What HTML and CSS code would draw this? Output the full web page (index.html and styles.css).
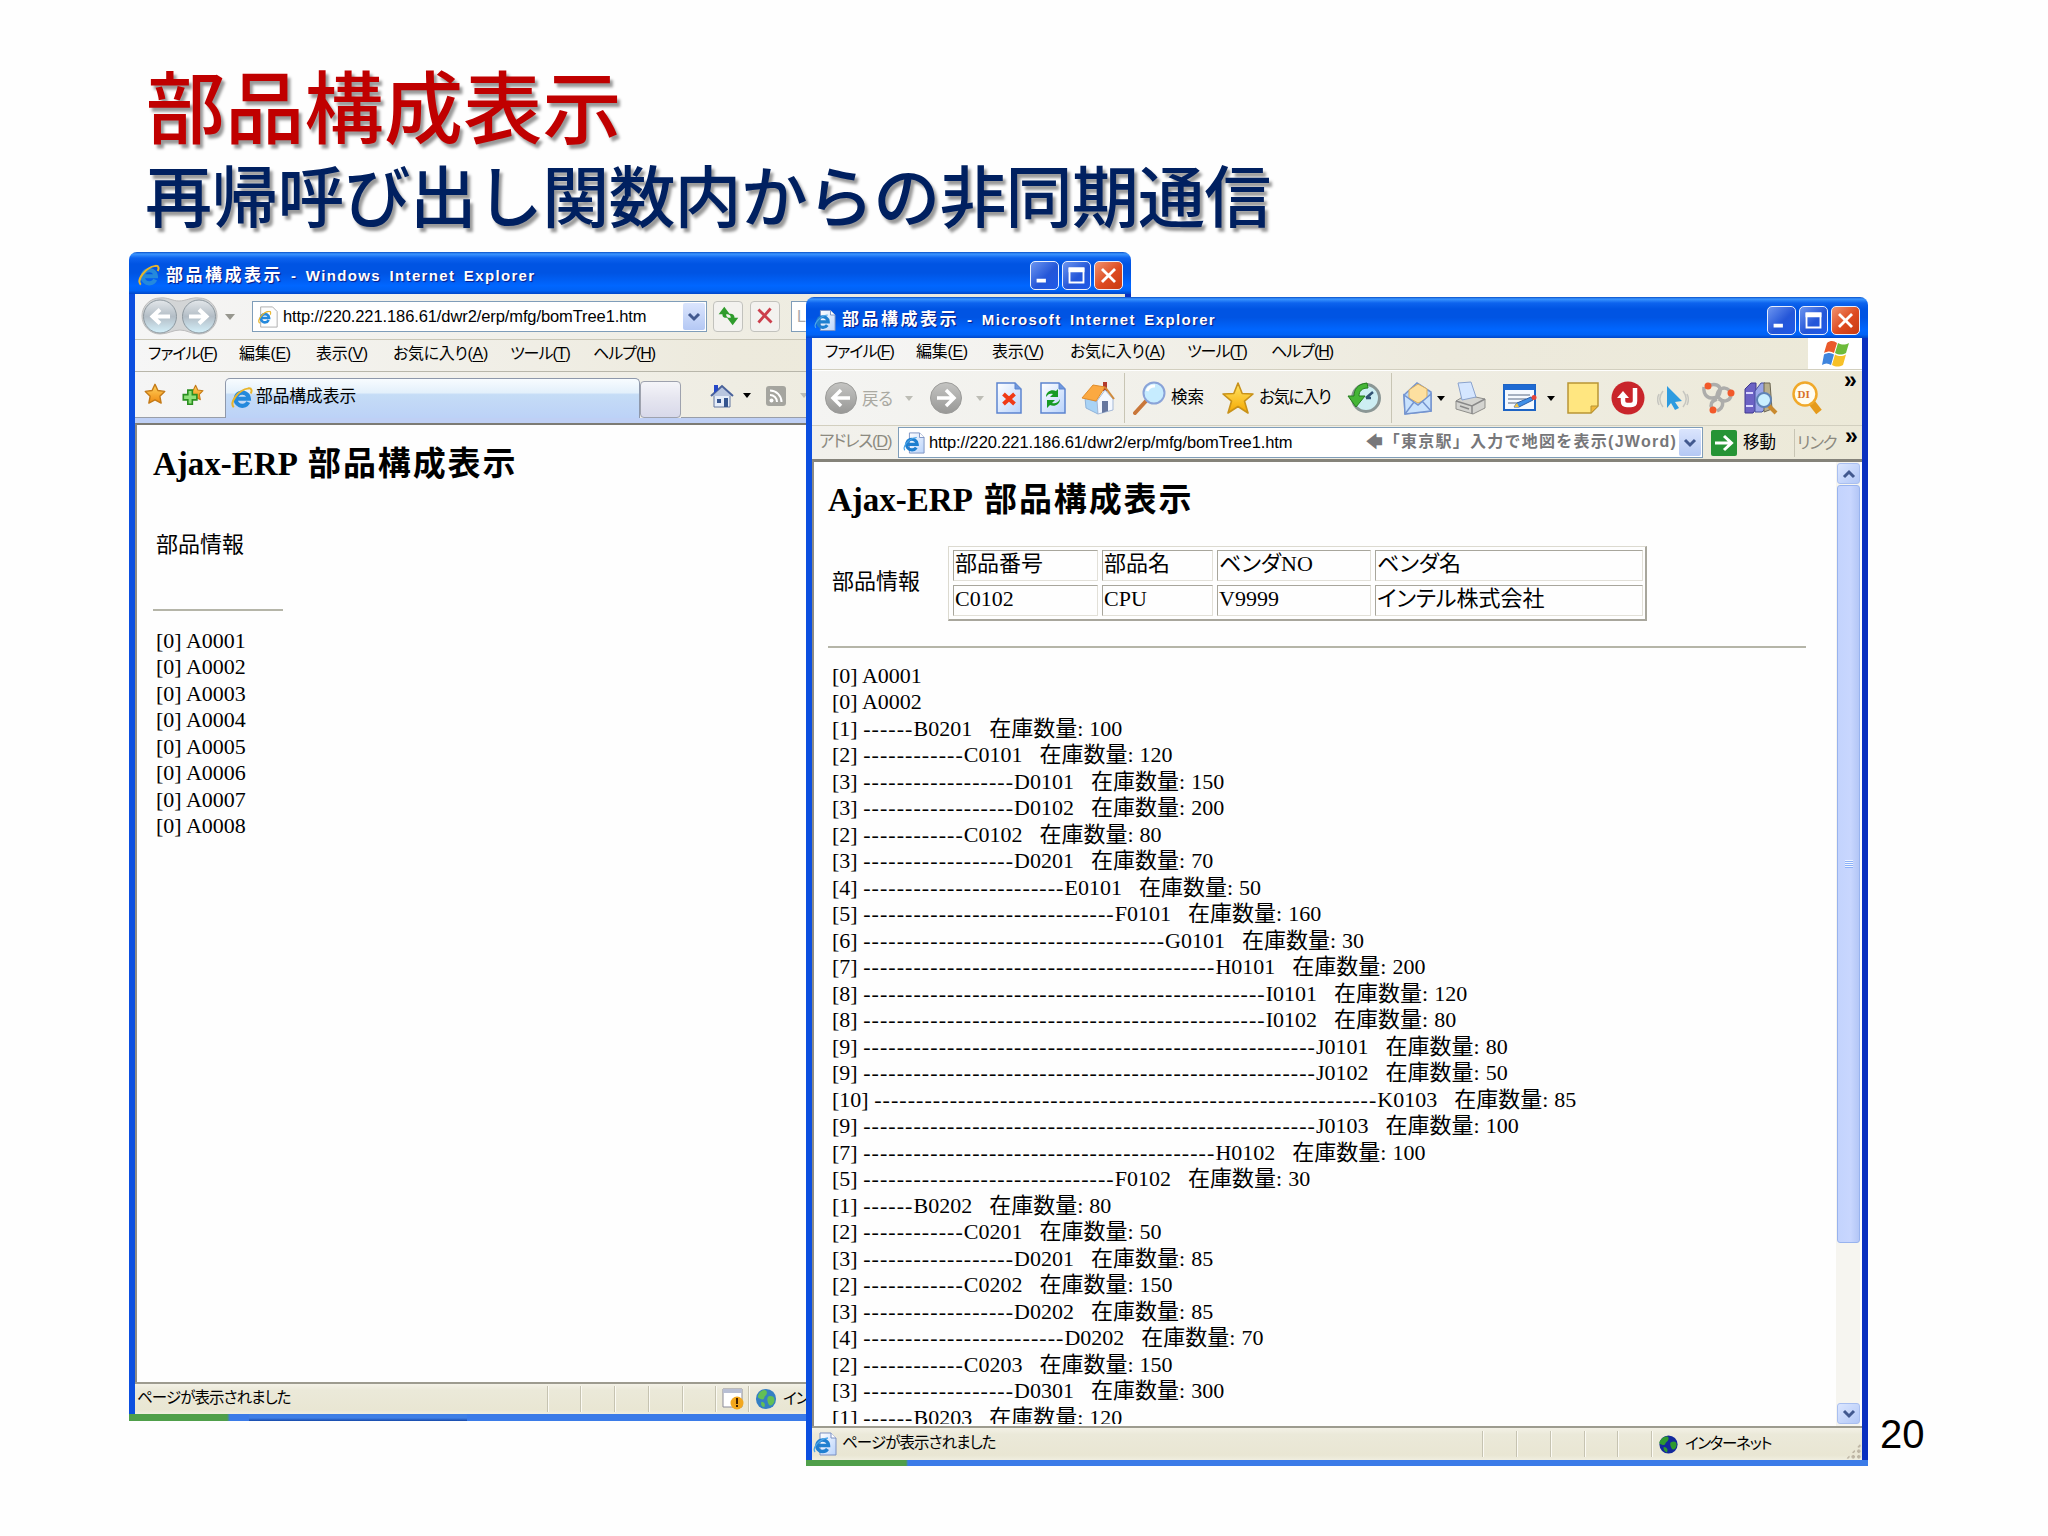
FILE: index.html
```html
<!DOCTYPE html>
<html lang="ja">
<head>
  <meta charset="UTF-8">
  <meta name="viewport" content="width=device-width, initial-scale=1.0">
  <title>部品構成表示</title>
  <link rel="stylesheet" href="styles.css">
</head>
<body>
  <!-- shared icons -->
  <svg class="defs" width="0" height="0">
    <defs>
      <linearGradient id="gPage" x1="0" y1="0" x2="1" y2="1"><stop offset="0" stop-color="#ffffff"/><stop offset="1" stop-color="#b9d3fb"/></linearGradient>
      <linearGradient id="gGrey" x1="0" y1="0" x2="0" y2="1"><stop offset="0" stop-color="#c4c4c2"/><stop offset="1" stop-color="#989896"/></linearGradient>
      <linearGradient id="gGold" x1="0" y1="0" x2="0" y2="1"><stop offset="0" stop-color="#ffe566"/><stop offset="1" stop-color="#f5a800"/></linearGradient>
      <linearGradient id="gOrange" x1="0" y1="0" x2="0" y2="1"><stop offset="0" stop-color="#ffd560"/><stop offset="1" stop-color="#f08a10"/></linearGradient>
      <linearGradient id="gNav" x1="0" y1="0" x2="0" y2="1"><stop offset="0" stop-color="#e3e7ea"/><stop offset=".5" stop-color="#b3bdc6"/><stop offset="1" stop-color="#d4f0fa"/></linearGradient>
      <symbol id="ie" viewBox="0 0 24 24">
        <path d="M18.800 16.500A7.200 7.200 0 1 1 19.500 12.800H7" fill="none" stroke="#2489dc" stroke-width="4.500"/>
        <path d="M3 22C-2 17 8 3 19 1.500c4-.4 4 3 2.500 5.500" fill="none" stroke="#e8b52c" stroke-width="2.200"/>
      </symbol>
      <symbol id="iepage" viewBox="0 0 24 24">
        <path d="M7 1h11l5 5v17H7z" fill="url(#gPage)" stroke="#7a8fc0"/>
        <path d="M18 1v5h5" fill="#fff" stroke="#7a8fc0"/>
        <path d="M14.500 17A5.800 5.800 0 1 1 15.500 13.500H5" fill="none" stroke="#1f7fd0" stroke-width="3.500"/>
        <path d="M2 20C-1 16 6 7 15 6" fill="none" stroke="#4aa5e8" stroke-width="1.300"/>
      </symbol>
      <symbol id="star" viewBox="0 0 34 34">
        <path d="M17 2l4.200 10.500L32 13l-8.500 7.200L27 32l-10-6.500L7 32l3.500-11.800L2 13l10.800-.5z" fill="url(#gGold)" stroke="#c8921a" stroke-width="1.600" stroke-linejoin="round"/>
      </symbol>
      <symbol id="star7" viewBox="0 0 34 34">
        <path d="M17 2l4.500 9.500L32 13l-7.500 7.500L26.500 31 17 26l-9.500 5 2-10.500L2 13l10.500-1.500z" fill="url(#gOrange)" stroke="#c47a18" stroke-width="2.200" stroke-linejoin="round"/>
      </symbol>
      <symbol id="page" viewBox="0 0 26 32">
        <path d="M1 1h18l6 6v24H1z" fill="url(#gPage)" stroke="#5c84cf" stroke-width="1.500"/>
        <path d="M19 1v6h6" fill="#6f97dd" stroke="#5c84cf"/>
      </symbol>
      <symbol id="chev" viewBox="0 0 14 10"><path d="M2 2l5 5 5-5" fill="none" stroke="#42598f" stroke-width="3"/></symbol>
    </defs>
  </svg>

  <main class="slide">
    <h1 class="slide-title">部品構成表示</h1>
    <p class="slide-sub">再帰呼び出し関数内からの非同期通信</p>

    <!-- back window : IE7 -->
    <section class="window win-back">
      <header class="titlebar">
        <svg class="title-icon" viewBox="0 0 24 24"><use href="#ie"/></svg>
        <span class="title-jp">部品構成表示</span><span class="title-en">- Windows Internet Explorer</span>
        <div class="controls">
          <span class="ctl"><svg viewBox="0 0 29 29"><path d="M6 18h10v4H6z" fill="#fff"/></svg></span>
          <span class="ctl"><svg viewBox="0 0 29 29"><path d="M7 7h15v15H7z" fill="none" stroke="#fff" stroke-width="2"/><path d="M6 6h17v5H6z" fill="#fff"/></svg></span>
          <span class="ctl close"><svg viewBox="0 0 29 29"><path d="M7.500 7.500l14 14m0-14l-14 14" stroke="#fff" stroke-width="3"/></svg></span>
        </div>
      </header>
      <div class="frame">
        <div class="nav7">
          <svg class="nav-btns" viewBox="0 0 78 39">
            <path d="M19 1C27 0 31 4 38 4S50 0 58 1a18 18 0 0 1 0 36c-8 0-12-4-19-4s-12 4-20 4A18 18 0 0 1 19 1z" fill="#d3d5d6" stroke="#bcbcbc"/>
            <circle cx="19" cy="19.500" r="16.500" fill="url(#gNav)" stroke="#8e989f"/>
            <circle cx="58" cy="19.500" r="16.500" fill="url(#gNav)" stroke="#8e989f"/>
            <path d="M29 19.500H12m7-7l-7.500 7 7.500 7M48 19.500h17m-7-7l7.500 7-7.500 7" fill="none" stroke="#fff" stroke-width="4"/>
          </svg>
          <span class="tri grey"></span>
          <div class="addr">
            <svg class="i22" viewBox="0 0 24 24"><path d="M4 1h13l5 5v17H4z" fill="#fdfdfd" stroke="#aaa"/><svg x="1" y="5" width="15" height="15"><use href="#ie"/></svg></svg>
            <span class="url">http://220.221.186.61/dwr2/erp/mfg/bomTree1.htm</span>
            <span class="drop"><svg viewBox="0 0 14 10"><use href="#chev"/></svg></span>
          </div>
          <span class="btn7"><svg viewBox="0 0 30 30"><path d="M11 5L5 13h4c0 4 3 4 6 4-2-2-2-3-2-4h4zM20 25l6-8h-4c0-4-3-5-7-4 3 1 3 3 3 4h-4z" fill="#2f9c2c"/></svg></span>
          <span class="btn7"><svg viewBox="0 0 30 30"><path d="M8 8l14 14M21 7L8 22" stroke="#cc3f4c" stroke-width="3"/></svg></span>
          <span class="search7">L</span>
        </div>
        <nav class="menu menu7">
          <span class="m1">ファイル(<u>F</u>)</span><span>編集(<u>E</u>)</span><span>表示(<u>V</u>)</span><span class="m4">お気に入り(<u>A</u>)</span><span class="m1">ツール(<u>T</u>)</span><span class="m1">ヘルプ(<u>H</u>)</span>
        </nav>
        <div class="tabs7">
          <div class="fav7">
            <svg class="i22" viewBox="0 0 34 34"><use href="#star7"/></svg>
            <svg class="i22" viewBox="0 0 34 34"><svg x="8" width="26" height="30"><use href="#star7"/></svg><path d="M9 11h7v7h7v8h-7v7H9v-7H2v-8h7z" fill="#8ee07a" stroke="#2b8f21" stroke-width="2.500"/></svg>
          </div>
          <div class="tab7"><svg class="i22" viewBox="0 0 24 24"><use href="#ie"/></svg><span>部品構成表示</span></div>
          <div class="newtab7"></div>
          <div class="cmd7">
            <svg width="24" height="26" viewBox="0 0 24 26"><path d="M4 12h16v12H4z" fill="#e6edf8" stroke="#63779f"/><path d="M1 13L12 3l11 10" fill="#b9c6df" stroke="#4a629a" stroke-width="2"/><path d="M4 2h4v5l-4 3z" fill="#2648c8"/><path d="M7 16h4v4H7zM14 15h4v9h-4z" fill="#35558f"/></svg>
            <span class="tri"></span>
            <svg width="20" height="20" viewBox="0 0 20 20"><rect width="20" height="20" rx="3" fill="#a5a59f"/><circle cx="5.500" cy="14.500" r="2" fill="#fff"/><path d="M4 9a7 7 0 0 1 7 7M4 4.500A11.500 11.500 0 0 1 15.500 16" fill="none" stroke="#fff" stroke-width="2"/></svg>
            <span class="tri pale"></span>
          </div>
        </div>
        <div class="page page7">
          <h2><b>Ajax-ERP</b>部品構成表示</h2>
          <p class="info">部品情報</p>
          <hr>
          <div class="tree">
            <div>[0] A0001</div>
            <div>[0] A0002</div>
            <div>[0] A0003</div>
            <div>[0] A0004</div>
            <div>[0] A0005</div>
            <div>[0] A0006</div>
            <div>[0] A0007</div>
            <div>[0] A0008</div>
          </div>
        </div>
        <footer class="status status7">
          <span class="st-text">ページが表示されました</span>
          <i></i><i></i><i></i><i></i><i></i>
          <i class="cell"><svg width="22" height="22" viewBox="0 0 22 22"><path d="M1 1h19v18H1z" fill="#fff" stroke="#8b8b98"/><path d="M1 1h19v4H1z" fill="#b8bfd4"/><circle cx="15" cy="15" r="6.500" fill="#f2a71d"/><path d="M14 10h2v6h-2zM14 17h2v2h-2z" fill="#402000"/></svg></i>
          <i class="cell"><svg width="22" height="22" viewBox="0 0 24 24"><circle cx="12" cy="12" r="11" fill="#347fc4"/><path d="M6 4c4-3 7-2 7 1s-2 3-3 6-4 1-6 0 0-5 2-7zM15 9c5-1 7 2 6 6s-5 5-6 3-3-7 0-9zM7 15c3 0 5 3 3 6-3-1-4-3-3-6z" fill="#63bf55"/></svg><span>イン</span></i>
        </footer>
      </div>
      <div class="taskstrip"></div>
    </section>

    <!-- front window : IE6 -->
    <section class="window win-front">
      <header class="titlebar">
        <svg class="title-icon" viewBox="0 0 24 24"><use href="#iepage"/></svg>
        <span class="title-jp">部品構成表示</span><span class="title-en">- Microsoft Internet Explorer</span>
        <div class="controls">
          <span class="ctl"><svg viewBox="0 0 29 29"><path d="M6 18h10v4H6z" fill="#fff"/></svg></span>
          <span class="ctl"><svg viewBox="0 0 29 29"><path d="M7 7h15v15H7z" fill="none" stroke="#fff" stroke-width="2"/><path d="M6 6h17v5H6z" fill="#fff"/></svg></span>
          <span class="ctl close"><svg viewBox="0 0 29 29"><path d="M7.500 7.500l14 14m0-14l-14 14" stroke="#fff" stroke-width="3"/></svg></span>
        </div>
      </header>
      <div class="frame">
        <nav class="menu menu6">
          <span class="m1">ファイル(<u>F</u>)</span><span>編集(<u>E</u>)</span><span>表示(<u>V</u>)</span><span class="m4">お気に入り(<u>A</u>)</span><span class="m1">ツール(<u>T</u>)</span><span class="m1">ヘルプ(<u>H</u>)</span>
          <div class="flag"><svg width="28" height="28" viewBox="0 0 28 28">
            <path d="M5 3c4-3 7-2 10 0l-3 10c-3-2-6-2-10 0z" fill="#ea5a2b"/><path d="M16 3c4 2 7 2 11 0l-3 10c-4 2-7 2-11 0z" fill="#6dbb3a"/>
            <path d="M2 14.500c4-2 7-2 10 0L9 25c-3-2-6-2-9 0z" fill="#3f85dd"/><path d="M13 14.500c4 2 7 2 11 0l-3 10.500c-4 2-7 2-11 0z" fill="#f7c128"/></svg></div>
        </nav>
        <div class="toolbar">
          <svg class="ic" width="32" height="32" viewBox="0 0 32 32"><circle cx="16" cy="16" r="15.500" fill="url(#gGrey)" stroke="#9b9b99"/><path d="M25 16H9m7-8l-8 8 8 8" fill="none" stroke="#fff" stroke-width="3.500"/></svg>
          <span class="dim">戻る</span>
          <span class="tri pale"></span>
          <svg class="ic" width="32" height="32" viewBox="0 0 32 32"><circle cx="16" cy="16" r="15.500" fill="url(#gGrey)" stroke="#9b9b99"/><path d="M7 16h16m-7-8l8 8-8 8" fill="none" stroke="#fff" stroke-width="3.500"/></svg>
          <span class="tri pale"></span>
          <svg class="ic" width="26" height="32" viewBox="0 0 26 32"><use href="#page"/><path d="M7.500 12l11 10m0-10l-11 10" stroke="#f03a17" stroke-width="4"/></svg>
          <svg class="ic" width="26" height="32" viewBox="0 0 26 32"><use href="#page"/><path d="M6 15c0-6 6-8 10-6l2-2v8h-8l3-3c-3-1-5 0-7 3zM20 17c0 6-6 8-10 6l-3 3v-8h8l-3 3c3 1 6 0 8-4z" fill="#179b23"/></svg>
          <svg class="ic" width="34" height="34" viewBox="0 0 34 34"><path d="M22 1h4v9h-4z" fill="#b33a2c"/><path d="M4 17l13 4v12L5 27z" fill="#a9d3f5" stroke="#8fb2d9"/><path d="M16 20l8-11 8 9v11l-15 4z" fill="#f4f8ff" stroke="#a5b9d6"/><path d="M1 17L12 4l12 2-9 14z" fill="#fba941" stroke="#e08c2a"/><path d="M24 6l9 12" stroke="#d08a3b" stroke-width="2"/><path d="M21 20h6v10l-6 2z" fill="#66779f"/></svg>
          <span class="sep"></span>
          <svg class="ic" width="34" height="34" viewBox="0 0 34 34"><path d="M14 20L3 32" stroke="#c9773a" stroke-width="4" stroke-linecap="round"/><circle cx="22" cy="12" r="10.500" fill="#c6ecff" stroke="#8aa3d8" stroke-width="2"/><path d="M15 10a8 8 0 0 1 8-5" fill="none" stroke="#fff" stroke-width="3"/></svg>
          <span class="tlabel">検索</span>
          <svg class="ic" width="34" height="34" viewBox="0 0 34 34"><use href="#star"/></svg>
          <span class="tlabel fav">お気に入り</span>
          <svg class="ic" width="34" height="34" viewBox="0 0 34 34"><circle cx="19" cy="17" r="13.500" fill="#cdeef2" stroke="#8b9795" stroke-width="3"/><path d="M19 17l7-6M19 17h5" stroke="#315273" stroke-width="2.500"/><path d="M20 2C10 3 7 9 7 15H1l8 11 9-11h-6c0-5 3-8 9-8z" fill="#45b536" stroke="#237d1c"/></svg>
          <span class="sep"></span>
          <svg class="ic" width="30" height="34" viewBox="0 0 30 34"><path d="M1 14L14 2l14 9v19L2 33z" fill="#b5d4f9" stroke="#7494cf" stroke-width="1.500"/><path d="M6 9l9-6 9 5v10l-9 4-9-5z" fill="#fde0a0" stroke="#dcae5a"/><path d="M1 14l14 10 13-11v17L2 33z" fill="#c9e2fd" stroke="#7494cf" stroke-width="1.500"/><path d="M2 33l9-12M28 30l-9-10" fill="none" stroke="#7494cf" stroke-width="1.500"/></svg>
          <span class="tri"></span>
          <svg class="ic" width="34" height="34" viewBox="0 0 34 34"><path d="M2 20l10-6 19 4v9l-12 6-17-5z" fill="#d4d4d0" stroke="#8f8f8b"/><path d="M4 2l13-1 5 15-14 3z" fill="#d5e6ff" stroke="#8ba3cd"/><path d="M2 20l16 5 13-7M18 25v8M6 25l9 3" fill="none" stroke="#888" stroke-width="1.500"/></svg>
          <svg class="ic" width="34" height="28" viewBox="0 0 34 28"><path d="M1 1h31v25H1z" fill="#f5f9ff" stroke="#1e64c4" stroke-width="2"/><path d="M1 1h31v5H1z" fill="#1e6ad2"/><path d="M5 11h22M5 15h18M5 19h12" stroke="#8a98ad" stroke-width="1.500"/><path d="M11 23l3-4 14-6 2 3-14 7z" fill="#3f8fe8" stroke="#2b5da8"/><path d="M11 23l3-4 2 4z" fill="#f5c542"/><circle cx="31" cy="13.500" r="2.500" fill="#e5453a"/></svg>
          <span class="tri"></span>
          <svg class="ic" width="32" height="32" viewBox="0 0 32 32"><path d="M1 1h30v23l-7 7H1z" fill="#ffe680" stroke="#b99534" stroke-width="1.500"/><path d="M31 24h-7v7z" fill="#f0b93a" stroke="#b99534"/></svg>
          <svg class="ic" width="34" height="34" viewBox="0 0 34 34"><circle cx="17" cy="17" r="16.500" fill="#c9252b"/><path d="M24 7v13q0 4-4 4h-4q-4 0-4-4v-5" fill="none" stroke="#fff" stroke-width="4.500"/><path d="M6 17l6-7 6 7z" fill="#fff"/></svg>
          <svg class="ic" width="32" height="28" viewBox="0 0 32 28"><path d="M10 2l15 15-7 1 4 6-4 2-4-7-4 5z" fill="#2d9be0"/><path d="M6 7c-4 5-4 11 0 16M2 10c-2 4-2 7 0 11M26 7c4 5 4 11 0 16M30 10c2 4 2 7 0 11" fill="none" stroke="#c6c6c0" stroke-width="1.500"/></svg>
          <svg class="ic" width="34" height="34" viewBox="0 0 34 34"><g fill="none" stroke="#adadab" stroke-width="3.500"><path d="M9 4c9-2 13 3 8 12"/><path d="M3 6c-1 9 5 13 13 10"/><path d="M16 16c0-8 7-12 13-6"/><path d="M30 15c-2 6-8 6-12 3"/><path d="M16 18c-6 2-7 6-5 9"/><path d="M16 16c7 3 8 10 0 14"/></g><circle cx="7" cy="5" r="3.500" fill="#f2592a"/><circle cx="30" cy="12" r="3.500" fill="#f2592a"/><circle cx="12" cy="29" r="3.500" fill="#f2592a"/></svg>
          <svg class="ic" width="34" height="34" viewBox="0 0 34 34"><path d="M1 8l6-6h5v26l-3 4H1z" fill="#6c62c4" stroke="#40398f"/><path d="M11 10l6-8h4v26l-3 3h-7z" fill="#9aa5e8" stroke="#474f9e"/><path d="M20 2h6l2 26-8 3z" fill="#b9af8d" stroke="#6d6753"/><path d="M2 12h7M2 25h7" stroke="#d9d6ff" stroke-width="2"/><path d="M24 24l8 8" stroke="#c98a2f" stroke-width="4"/><circle cx="20" cy="19" r="7" fill="#c9efff" stroke="#5f83b6" stroke-width="2"/></svg>
          <svg class="ic" width="32" height="34" viewBox="0 0 32 34"><path d="M20 22l7 9" stroke="#e59a1b" stroke-width="7"/><circle cx="13" cy="13" r="11.500" fill="#fffdf2" stroke="#f0a92a" stroke-width="2.500"/><text x="5.500" y="17" class="di">DI</text></svg>
          <span class="more">»</span>
        </div>
        <div class="addrbar">
          <span class="addr-label">アドレス(<u>D</u>)</span>
          <div class="addr">
            <svg class="i22" viewBox="0 0 24 24"><use href="#iepage"/></svg>
            <span class="url">http://220.221.186.61/dwr2/erp/mfg/bomTree1.htm</span>
            <span class="jword">🡄「東京駅」入力で地図を表示(JWord)</span>
            <span class="drop"><svg viewBox="0 0 14 10"><use href="#chev"/></svg></span>
          </div>
          <svg class="go" width="26" height="26" viewBox="0 0 26 26"><rect width="26" height="26" rx="2" fill="#269435"/><path d="M4 13h16m-7-7l7.500 7-7.500 7" fill="none" stroke="#fff" stroke-width="3"/></svg>
          <span class="tlabel">移動</span>
          <span class="links">リンク</span>
          <span class="more">»</span>
        </div>
        <div class="view">
          <div class="page page6">
            <h2><b>Ajax-ERP</b>部品構成表示</h2>
            <div class="inforow">
              <p class="info">部品情報</p>
              <div class="parts">
                <span>部品番号</span><span>部品名</span><span>ベンダNO</span><span>ベンダ名</span>
                <span>C0102</span><span>CPU</span><span>V9999</span><span>インテル株式会社</span>
              </div>
            </div>
            <hr>
            <div class="tree">
              <div>[0] A0001</div>
              <div>[0] A0002</div>
              <div>[1] <s>------</s>B0201<em>在庫数量:</em>100</div>
              <div>[2] <s>------------</s>C0101<em>在庫数量:</em>120</div>
              <div>[3] <s>------------------</s>D0101<em>在庫数量:</em>150</div>
              <div>[3] <s>------------------</s>D0102<em>在庫数量:</em>200</div>
              <div>[2] <s>------------</s>C0102<em>在庫数量:</em>80</div>
              <div>[3] <s>------------------</s>D0201<em>在庫数量:</em>70</div>
              <div>[4] <s>------------------------</s>E0101<em>在庫数量:</em>50</div>
              <div>[5] <s>------------------------------</s>F0101<em>在庫数量:</em>160</div>
              <div>[6] <s>------------------------------------</s>G0101<em>在庫数量:</em>30</div>
              <div>[7] <s>------------------------------------------</s>H0101<em>在庫数量:</em>200</div>
              <div>[8] <s>------------------------------------------------</s>I0101<em>在庫数量:</em>120</div>
              <div>[8] <s>------------------------------------------------</s>I0102<em>在庫数量:</em>80</div>
              <div>[9] <s>------------------------------------------------------</s>J0101<em>在庫数量:</em>80</div>
              <div>[9] <s>------------------------------------------------------</s>J0102<em>在庫数量:</em>50</div>
              <div>[10] <s>------------------------------------------------------------</s>K0103<em>在庫数量:</em>85</div>
              <div>[9] <s>------------------------------------------------------</s>J0103<em>在庫数量:</em>100</div>
              <div>[7] <s>------------------------------------------</s>H0102<em>在庫数量:</em>100</div>
              <div>[5] <s>------------------------------</s>F0102<em>在庫数量:</em>30</div>
              <div>[1] <s>------</s>B0202<em>在庫数量:</em>80</div>
              <div>[2] <s>------------</s>C0201<em>在庫数量:</em>50</div>
              <div>[3] <s>------------------</s>D0201<em>在庫数量:</em>85</div>
              <div>[2] <s>------------</s>C0202<em>在庫数量:</em>150</div>
              <div>[3] <s>------------------</s>D0202<em>在庫数量:</em>85</div>
              <div>[4] <s>------------------------</s>D0202<em>在庫数量:</em>70</div>
              <div>[2] <s>------------</s>C0203<em>在庫数量:</em>150</div>
              <div>[3] <s>------------------</s>D0301<em>在庫数量:</em>300</div>
              <div>[1] <s>------</s>B0203<em>在庫数量:</em>120</div>
            </div>
          </div>
          <div class="scroll">
            <span class="sbtn up"><svg viewBox="0 0 14 10"><use href="#chev"/></svg></span>
            <span class="thumb"></span>
            <span class="sbtn"><svg viewBox="0 0 14 10"><use href="#chev"/></svg></span>
          </div>
        </div>
        <footer class="status status6">
          <svg class="st-icon" viewBox="0 0 24 24"><use href="#iepage"/></svg>
          <span class="st-text">ページが表示されました</span>
          <i></i><i></i><i></i><i></i><i></i>
          <i class="cell"><svg width="19" height="19" viewBox="0 0 24 24"><circle cx="12" cy="12" r="11.500" fill="#13299c"/><path d="M4 4c4-3 9-3 8 1s-3 3-4 6-5 1-7 0 1-5 3-7zM15 9c5-2 8 0 7 5s-5 5-6 3-3-6-1-8zM6 15c4 0 6 3 4 7-3-1-5-4-4-7z" fill="#2f9a2f"/></svg><span>インターネット</span></i>
          <span class="grip"></span>
        </footer>
      </div>
      <div class="taskstrip"></div>
    </section>

    <span class="slide-no">20</span>
  </main>
</body>
</html>
```
FILE: styles.css
```css
* {
  box-sizing: border-box;
}
body {
  margin: 0;
  background: #fefefe;
  color: #000;
  font-family: 'Liberation Sans', 'Noto Sans CJK JP', sans-serif;
}
.defs {
  position: absolute;
}
.slide {
  position: relative;
  width: 2048px;
  height: 1536px;
  overflow: hidden;
  padding: 67px 0 0 146px;
}
.slide-title {
  margin: 0;
  font-size: 79px;
  line-height: 88px;
  font-weight: 500;
  letter-spacing: 0.3px;
  color: #c00000;
  text-shadow: 3px 4px 3px rgba(0, 0, 0, 0.4);
}
.slide-sub {
  margin: 0 0 0 -1px;
  font-size: 67px;
  line-height: 88px;
  font-weight: 500;
  letter-spacing: -0.8px;
  color: #002060;
  text-shadow: 3px 4px 3px rgba(0, 0, 0, 0.4);
  white-space: nowrap;
}
.slide-no {
  position: absolute;
  left: 1880px;
  top: 1411px;
  font-size: 40px;
  line-height: 46px;
}

/* windows */
.window {
  position: absolute;
  display: flex;
  flex-direction: column;
  border-radius: 8px 8px 0 0;
  overflow: hidden;
}
.win-back {
  left: 129px;
  top: 252px;
  width: 1002px;
  height: 1169px;
}
.win-front {
  left: 806px;
  top: 297px;
  width: 1062px;
  height: 1169px;
}
.titlebar {
  flex: none;
  height: 42px;
  display: flex;
  align-items: center;
  padding: 5px 8px 0 9px;
  background: linear-gradient(#0a50c8 0, #3b95ff 2px, #0d63ee 6px, #0054e3 12px, #0054e3 50%, #0066ff 80%, #0062f5 92%, #0046c8 100%);
  color: #fff;
  font-weight: bold;
  white-space: nowrap;
  text-shadow: 1px 1px 1px #0a1883;
}
.title-icon {
  width: 22px;
  height: 23px;
}
.title-jp {
  margin-left: 6px;
  width: 125px;
  font-size: 17px;
  line-height: 24px;
  letter-spacing: 2.5px;
}
.title-en {
  font-size: 15px;
  line-height: 24px;
  letter-spacing: 1.35px;
  word-spacing: 3px;
}
.win-front .titlebar {
  height: 41px;
  padding-left: 8px;
}
.controls {
  margin-left: auto;
  display: flex;
  gap: 3px;
}
.ctl {
  width: 29px;
  height: 29px;
  border: 1.5px solid #e8eefc;
  border-radius: 5px;
  background: linear-gradient(135deg, #6c95f0, #2456d8 55%, #1f5ae8);
}
.ctl svg {
  display: block;
  width: 100%;
  height: 100%;
}
.close {
  background: linear-gradient(135deg, #f0936f, #dd4a20 55%, #c83a12);
}
.frame {
  flex: 1;
  min-height: 0;
  display: flex;
  flex-direction: column;
  border: solid #0b50dc;
  border-width: 0 6px;
  border-left-color: #0c4fe0;
  border-right-color: #0a30c0;
}
.taskstrip {
  flex: none;
  height: 6px;
  background: linear-gradient(90deg, #4f9f4a 100px, #3b7be8 102px);
}
.win-back .taskstrip {
  height: 7px;
  background:
    linear-gradient(#3f7fe6 4px, #1648a8 7px) 120px 0 / 218px 7px no-repeat,
    linear-gradient(90deg, #4f9f4a 98px, #3b7be8 101px);
}
.i22 {
  flex: none;
  width: 22px;
  height: 22px;
}
.tri {
  width: 0;
  height: 0;
  border: 4px solid transparent;
  border-top: 5px solid #000;
  border-bottom: 0;
}
.tri.grey {
  border-width: 6px 5px 0;
  border-top-color: #97978f;
}
.tri.pale {
  border-top-color: #bdbdb5;
}

/* menus */
.menu {
  flex: none;
  display: grid;
  align-items: center;
  font-size: 16px;
  letter-spacing: -0.3px;
  font-feature-settings: 'palt';
  white-space: nowrap;
  background: linear-gradient(90deg, #f6f6f6, #edeadd 60%, #ece9d8);
}
.menu span {
  line-height: 24px;
  margin-top: -4px;
}
.menu u,
.addr-label u {
  text-underline-offset: 2px;
}
.menu .m1 {
  letter-spacing: -1px;
}
.menu7 {
  height: 33px;
  grid-template-columns: 91px 77px 77px 117px 83px 1fr;
  padding-left: 13px;
  border-top: 1px solid #c9c6b6;
  border-bottom: 1px solid #b8b6aa;
}
.menu6 {
  height: 32px;
  grid-template-columns: 91px 76px 78px 117px 84px 1fr 54px;
  padding-left: 13px;
  border-bottom: 1px solid #d2cfbf;
}
.flag {
  height: 31px;
  background: #fff;
  padding: 2px 0 0 14px;
}
.addr {
  display: flex;
  align-items: center;
  height: 31px;
  border: 1px solid #7f9db9;
  background: #fff;
  padding: 0 1px 0 4px;
}
.url {
  margin-left: 4px;
  font-size: 16.5px;
  letter-spacing: -0.1px;
  white-space: nowrap;
}
.drop {
  margin-left: auto;
  width: 22px;
  height: 27px;
  border-radius: 2px;
  background: linear-gradient(#dbe5fd, #b4c8f4);
  display: flex;
  align-items: center;
  justify-content: center;
}
.drop svg,
.sbtn svg {
  width: 14px;
  height: 10px;
}

/* IE7 chrome */
.nav7 {
  flex: none;
  height: 45px;
  display: grid;
  grid-template-columns: 84px 27px 461px 37px 41px 1fr;
  align-items: center;
  padding-left: 6px;
  background: linear-gradient(90deg, #f5f5f5, #efede3 60%, #ece9d8);
}
.nav-btns {
  width: 78px;
  height: 39px;
}
.nav7 .addr {
  width: 455px;
}
.btn7 {
  width: 30px;
  height: 31px;
  border: 1px solid #c2c2bd;
  border-radius: 4px;
  background: #f3f2ef;
}
.btn7 svg {
  display: block;
}
.search7 {
  height: 31px;
  border: 1px solid #7f9db9;
  background: #fff;
  color: #aaa;
  font-size: 16px;
  line-height: 29px;
  padding-left: 5px;
}
.tabs7 {
  flex: none;
  height: 51px;
  display: grid;
  grid-template-columns: 90px 415px 41px 1fr;
  background: linear-gradient(90deg, #f5f5f5, #efede3 60%, #ece9d8);
  border-bottom: 5px solid #bfd0f5;
}
.fav7 {
  height: 46px;
  display: flex;
  gap: 16px;
  padding: 11px 0 0 9px;
  border-bottom: 1px solid #999ea8;
}
.tab7 {
  margin-top: 6px;
  display: flex;
  align-items: center;
  gap: 3px;
  padding-left: 5px;
  border: 1px solid #8e98ab;
  border-bottom: 0;
  border-radius: 5px 5px 0 0;
  background: linear-gradient(#f8fcff, #e3f0fb 35%, #c5dcf6 40%, #bcd2f7);
  font-size: 16.7px;
}
.tab7 span {
  line-height: 24px;
  margin-top: -3px;
}
.tab7 svg {
  margin-top: -2px;
}
.newtab7 {
  margin-top: 9px;
  height: 37px;
  border: 1px solid #9ea2ae;
  border-radius: 4px;
  background: linear-gradient(#f5f5f9, #e6e6f0 45%, #d8d9ea);
}
.cmd7 {
  height: 46px;
  display: grid;
  grid-template-columns: 33px 23px 34px 20px;
  align-items: center;
  padding: 2px 0 0 29px;
  border-bottom: 1px solid #999ea8;
}

/* page contents */
.page {
  background: #fefefe;
  font-family: 'Liberation Serif', 'Noto Sans CJK JP', serif;
  font-size: 22px;
}
.page h2 {
  display: flex;
  margin: 0;
  font-size: 33px;
  line-height: 40px;
  letter-spacing: 1.9px;
  white-space: nowrap;
}
.page h2 b {
  width: 155px;
  letter-spacing: 0;
}
.info {
  margin: 0;
  line-height: 27px;
}
.page hr {
  margin: 0;
  border: 0;
  border-top: 2px solid #b5b5a8;
}
.tree div {
  height: 26.49px;
  line-height: 26.49px;
  white-space: pre;
}
.tree s {
  text-decoration: none;
  letter-spacing: 1.06px;
}
.tree em {
  font-style: normal;
  margin: 0 6px 0 17px;
}
.page7 {
  flex: 1;
  border-top: 2px solid #7d7b74;
  border-left: 2px solid #8d8b84;
  padding: 19px 0 0 16px;
}
.page7 .info {
  margin: 47px 0 0 3px;
}
.page7 hr {
  width: 130px;
  margin-top: 51px;
}
.page7 .tree {
  margin: 17px 0 0 3px;
}

/* status bars */
.status {
  flex: none;
  display: grid;
  align-items: center;
  border-top: 2px solid #9d9b8f;
  background: linear-gradient(#f3f1e6, #ebe9d9 20%, #e9e6d3 85%, #f0eee0);
  font-size: 15.5px;
  letter-spacing: -0.9px;
  font-feature-settings: 'palt';
  white-space: nowrap;
}
.status span {
  line-height: 24px;
}
.status i {
  height: 26px;
  font-style: normal;
  border-left: 1px solid #c6c3b1;
  box-shadow: inset 1px 0 #fbfaf3;
}
.status .cell {
  display: flex;
  align-items: center;
  gap: 6px;
  padding-left: 6px;
}
.status7 {
  height: 32px;
  grid-template-columns: 410px 33px 34px 34px 34px 33px 33px 1fr;
  padding-left: 2px;
}
.status6 {
  height: 34px;
  grid-template-columns: 29px 640px 34px 34px 34px 33px 34px 194px 1fr;
  padding-left: 1px;
}
.status6 .cell {
  padding-left: 7px;
  gap: 7px;
  letter-spacing: -1.3px;
}
.st-text {
  margin-top: -2px;
}
.st-icon {
  width: 24px;
  height: 24px;
}
.grip {
  align-self: end;
  width: 16px;
  height: 17px;
  background: radial-gradient(circle, #bdb5a4 1.5px, transparent 2px) 0 0 / 5.500px 5.500px;
  clip-path: polygon(100% 0, 100% 100%, 0 100%);
}

/* IE6 chrome */
.toolbar {
  flex: none;
  height: 56px;
  display: grid;
  /* each track runs from one item's left edge to the next */
  grid-template-columns: 37px 43px 25px 46px 20px 44px 41px 43px 8px 39px 50px 38px 88px 44px 12px 34px 17px 49px 44px 20px 44px 46px 44px 43px 48px 52px 1fr;
  align-items: center;
  padding-left: 13px;
  background: linear-gradient(90deg, #f4f4f2, #efede3 60%, #ece9d8);
  border-top: 1px solid #fff;
  border-bottom: 1px solid #d2cfbf;
  font-size: 16.5px;
  white-space: nowrap;
}
.dim {
  color: #aaa9a2;
  letter-spacing: -1px;
}
.tlabel {
  line-height: 24px;
  margin-top: -2px;
}
.sep {
  width: 1px;
  height: 50px;
  background: #c8c5b4;
}
.fav {
  letter-spacing: -1.4px;
  font-feature-settings: 'palt';
}
.di {
  font: bold 11px 'Liberation Serif', serif;
  fill: #d8702a;
}
.more {
  align-self: start;
  font-size: 23px;
  line-height: 18px;
  font-weight: bold;
}
.addrbar {
  flex: none;
  height: 33px;
  display: grid;
  grid-template-columns: 79px 813px 32px 51px 51px 1fr;
  align-items: center;
  padding-left: 7px;
  background: linear-gradient(90deg, #f2f1ec, #ece9d8);
  font-size: 16.5px;
  white-space: nowrap;
}
.addr-label,
.links {
  color: #8c8a80;
  letter-spacing: -1.2px;
  font-feature-settings: 'palt';
}
.addr-label {
  line-height: 24px;
  margin-top: -4px;
}
.addrbar .addr {
  width: 805px;
}
.links {
  border-left: 1px solid #c8c5b4;
  padding-left: 2px;
  line-height: 28px;
}
.addrbar .more {
  line-height: 20px;
}
.jword {
  margin-left: auto;
  color: #77777a;
  font-weight: bold;
  font-size: 16px;
  letter-spacing: 1.25px;
}
.jword + .drop {
  margin-left: 2px;
}
.view {
  flex: 1;
  min-height: 0;
  display: flex;
  border-top: 3px solid #85837a;
  border-left: 2px solid #8d8b84;
  padding-right: 2px;
  background: #fefefe;
}
.page6 {
  flex: 1;
  padding: 18px 0 3px 14px;
  overflow: hidden;
  height: 962px;
}
.page6 h2 b {
  width: 156px;
}
.inforow {
  display: grid;
  grid-template-columns: 116px 699px;
  align-items: center;
  margin: 26px 0 0 4px;
}
.inforow .info {
  margin-top: -4px;
}
.parts {
  display: grid;
  grid-template-columns: 145px 111px 154px 268px;
  gap: 4px;
  padding: 3px 4px;
  border: solid;
  border-width: 1px 2px 2px 1px;
  border-color: #dcdad0 #a8a69c #a8a69c #dcdad0;
}
.parts span {
  height: 31px;
  line-height: 26px;
  padding-left: 1px;
  border: 1px solid;
  border-color: #a8a69c #e2e0d8 #e2e0d8 #a8a69c;
  font-feature-settings: 'palt';
}
.page6 hr {
  width: 978px;
  margin-top: 25px;
}
.page6 .tree {
  margin: 15px 0 0 4px;
}
.scroll {
  width: 24px;
  padding: 1px 0 2px 1px;
  display: flex;
  flex-direction: column;
  background: #f6f5f0;
}
.sbtn {
  flex: none;
  height: 21px;
  border: 1px solid #a9bff0;
  border-radius: 3px;
  background: linear-gradient(135deg, #dbe6ff, #b3c8f7);
  display: flex;
  align-items: center;
  justify-content: center;
}
.up svg {
  transform: rotate(180deg);
}
.thumb {
  flex: none;
  height: 758px;
  margin: 1px 0 auto;
  border: 1px solid #98b3ee;
  border-radius: 3px;
  background:
    repeating-linear-gradient(#eef4fe 0 1px, #8cb0f8 1px 2px) 50% 50% / 8px 8px no-repeat,
    linear-gradient(90deg, #c3d3fd, #c8d6fe 60%, #b3c6f6);
}
```
